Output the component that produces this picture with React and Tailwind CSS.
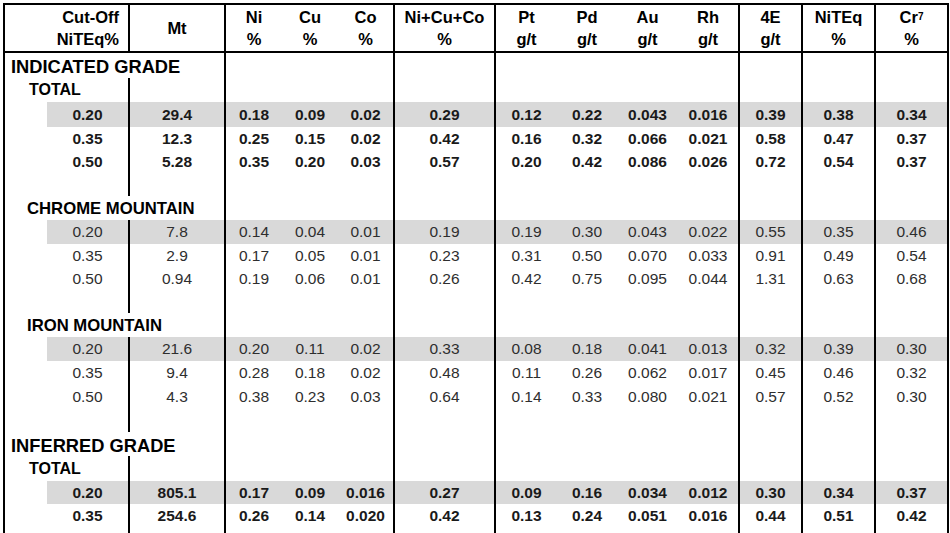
import React from "react";

const COLS =
  "grid grid-cols-[125px_96px_56px_56px_57px_101px_61px_60px_61px_62px_63px_73px_73px]";
const BORDERED = [0, 1, 4, 5, 9, 10, 11, 12];

function HeaderCell({ i, children, className = "" }) {
  const b = BORDERED.includes(i) ? "border-r-2 border-black" : "";
  return (
    <div
      className={`${b} flex flex-col justify-center text-[16.5px] leading-[22px] font-bold text-black ${className}`}
    >
      {children}
    </div>
  );
}

function Header() {
  const groups = [
    ["Ni", "%"],
    ["Cu", "%"],
    ["Co", "%"],
    ["Ni+Cu+Co", "%"],
    ["Pt", "g/t"],
    ["Pd", "g/t"],
    ["Au", "g/t"],
    ["Rh", "g/t"],
    ["4E", "g/t"],
    ["NiTEq", "%"],
  ];
  return (
    <div className={`${COLS} h-[48px] border-b-2 border-black`}>
      <HeaderCell i={0} className="items-end pr-[9px] text-right">
        <span>Cut-Off</span>
        <span>NiTEq%</span>
      </HeaderCell>
      <HeaderCell i={1} className="items-center text-center">
        <span>Mt</span>
      </HeaderCell>
      {groups.map((g, k) => (
        <HeaderCell key={k} i={k + 2} className="items-center text-center">
          <span>{g[0]}</span>
          <span>{g[1]}</span>
        </HeaderCell>
      ))}
      <HeaderCell i={12} className="items-center text-center">
        <span>
          Cr<sup className="text-[10px] relative -top-[3px]">7</sup>
        </span>
        <span>%</span>
      </HeaderCell>
    </div>
  );
}

function DataRow({ h, vals, bold, gray }) {
  const txt = bold ? "font-bold text-[#1a1a1a]" : "font-normal text-[#2e2e2e]";
  const bg = gray ? "bg-[#d9d9d9]" : "";
  return (
    <div className={`${COLS} ${h} text-[15.5px] ${txt}`}>
      <div className="flex border-r-2 border-black pl-[42px]">
        <div className={`flex flex-1 items-center justify-center ${bg}`}>
          {vals[0]}
        </div>
      </div>
      {vals.slice(1).map((v, k) => {
        const i = k + 1;
        const b = BORDERED.includes(i) ? "border-r-2 border-black" : "";
        return (
          <div
            key={i}
            className={`flex items-center justify-center ${b} ${bg}`}
          >
            {v}
          </div>
        );
      })}
    </div>
  );
}

function EmptyCells({ from }) {
  const cells = [];
  for (let i = from; i < 13; i++) {
    const b = BORDERED.includes(i) ? "border-r-2 border-black" : "";
    cells.push(<div key={i} className={b} />);
  }
  return cells;
}

function BlankRow({ h }) {
  return (
    <div className={`${COLS} ${h}`}>
      <div className="border-r-2 border-black" />
      <EmptyCells from={1} />
    </div>
  );
}

function LabelRow({ h, text, size, pad, spanFirst }) {
  if (spanFirst) {
    return (
      <div className={`${COLS} ${h}`}>
        <div
          className={`col-span-2 flex items-center whitespace-nowrap border-r-2 border-black font-bold text-black ${size} ${pad}`}
        >
          {text}
        </div>
        <EmptyCells from={2} />
      </div>
    );
  }
  return (
    <div className={`${COLS} ${h}`}>
      <div
        className={`flex items-center whitespace-nowrap border-r-2 border-black font-bold text-black ${size} ${pad}`}
      >
        {text}
      </div>
      <EmptyCells from={1} />
    </div>
  );
}

const indicated = [
  ["0.20", "29.4", "0.18", "0.09", "0.02", "0.29", "0.12", "0.22", "0.043", "0.016", "0.39", "0.38", "0.34"],
  ["0.35", "12.3", "0.25", "0.15", "0.02", "0.42", "0.16", "0.32", "0.066", "0.021", "0.58", "0.47", "0.37"],
  ["0.50", "5.28", "0.35", "0.20", "0.03", "0.57", "0.20", "0.42", "0.086", "0.026", "0.72", "0.54", "0.37"],
];
const chrome = [
  ["0.20", "7.8", "0.14", "0.04", "0.01", "0.19", "0.19", "0.30", "0.043", "0.022", "0.55", "0.35", "0.46"],
  ["0.35", "2.9", "0.17", "0.05", "0.01", "0.23", "0.31", "0.50", "0.070", "0.033", "0.91", "0.49", "0.54"],
  ["0.50", "0.94", "0.19", "0.06", "0.01", "0.26", "0.42", "0.75", "0.095", "0.044", "1.31", "0.63", "0.68"],
];
const iron = [
  ["0.20", "21.6", "0.20", "0.11", "0.02", "0.33", "0.08", "0.18", "0.041", "0.013", "0.32", "0.39", "0.30"],
  ["0.35", "9.4", "0.28", "0.18", "0.02", "0.48", "0.11", "0.26", "0.062", "0.017", "0.45", "0.46", "0.32"],
  ["0.50", "4.3", "0.38", "0.23", "0.03", "0.64", "0.14", "0.33", "0.080", "0.021", "0.57", "0.52", "0.30"],
];
const inferred = [
  ["0.20", "805.1", "0.17", "0.09", "0.016", "0.27", "0.09", "0.16", "0.034", "0.012", "0.30", "0.34", "0.37"],
  ["0.35", "254.6", "0.26", "0.14", "0.020", "0.42", "0.13", "0.24", "0.051", "0.016", "0.44", "0.51", "0.42"],
];

export default function App() {
  return (
    <div className="min-h-screen bg-white font-['Liberation_Sans',Arial,sans-serif]">
      <div className="ml-[3px] pt-[3px]">
        <div className="w-[946px] border-l-2 border-t-2 border-black">
          <Header />

          <LabelRow h="h-[25px]" text="INDICATED GRADE" size="text-[18.3px]" pad="pl-[6px]" spanFirst />
          <LabelRow h="h-[24px]" text="TOTAL" size="text-[16px]" pad="pl-[24px]" />
          <DataRow h="h-[25px]" vals={indicated[0]} bold gray />
          <DataRow h="h-[23px]" vals={indicated[1]} bold />
          <DataRow h="h-[23px]" vals={indicated[2]} bold />
          <BlankRow h="h-[23px]" />

          <LabelRow h="h-[24px]" text="CHROME MOUNTAIN" size="text-[16.7px]" pad="pl-[22px]" spanFirst />
          <DataRow h="h-[24px]" vals={chrome[0]} gray />
          <DataRow h="h-[23px]" vals={chrome[1]} />
          <DataRow h="h-[23px]" vals={chrome[2]} />
          <BlankRow h="h-[23px]" />

          <LabelRow h="h-[24px]" text="IRON MOUNTAIN" size="text-[16.7px]" pad="pl-[22px]" spanFirst />
          <DataRow h="h-[24px]" vals={iron[0]} gray />
          <DataRow h="h-[24px]" vals={iron[1]} />
          <DataRow h="h-[23px]" vals={iron[2]} />
          <BlankRow h="h-[24px]" />

          <LabelRow h="h-[24px]" text="INFERRED GRADE" size="text-[18.3px]" pad="pl-[6px]" spanFirst />
          <LabelRow h="h-[25px]" text="TOTAL" size="text-[16px]" pad="pl-[24px]" />
          <DataRow h="h-[23px]" vals={inferred[0]} bold gray />
          <DataRow h="h-[24px]" vals={inferred[1]} bold />
          <BlankRow h="h-[24px]" />
        </div>
      </div>
    </div>
  );
}
